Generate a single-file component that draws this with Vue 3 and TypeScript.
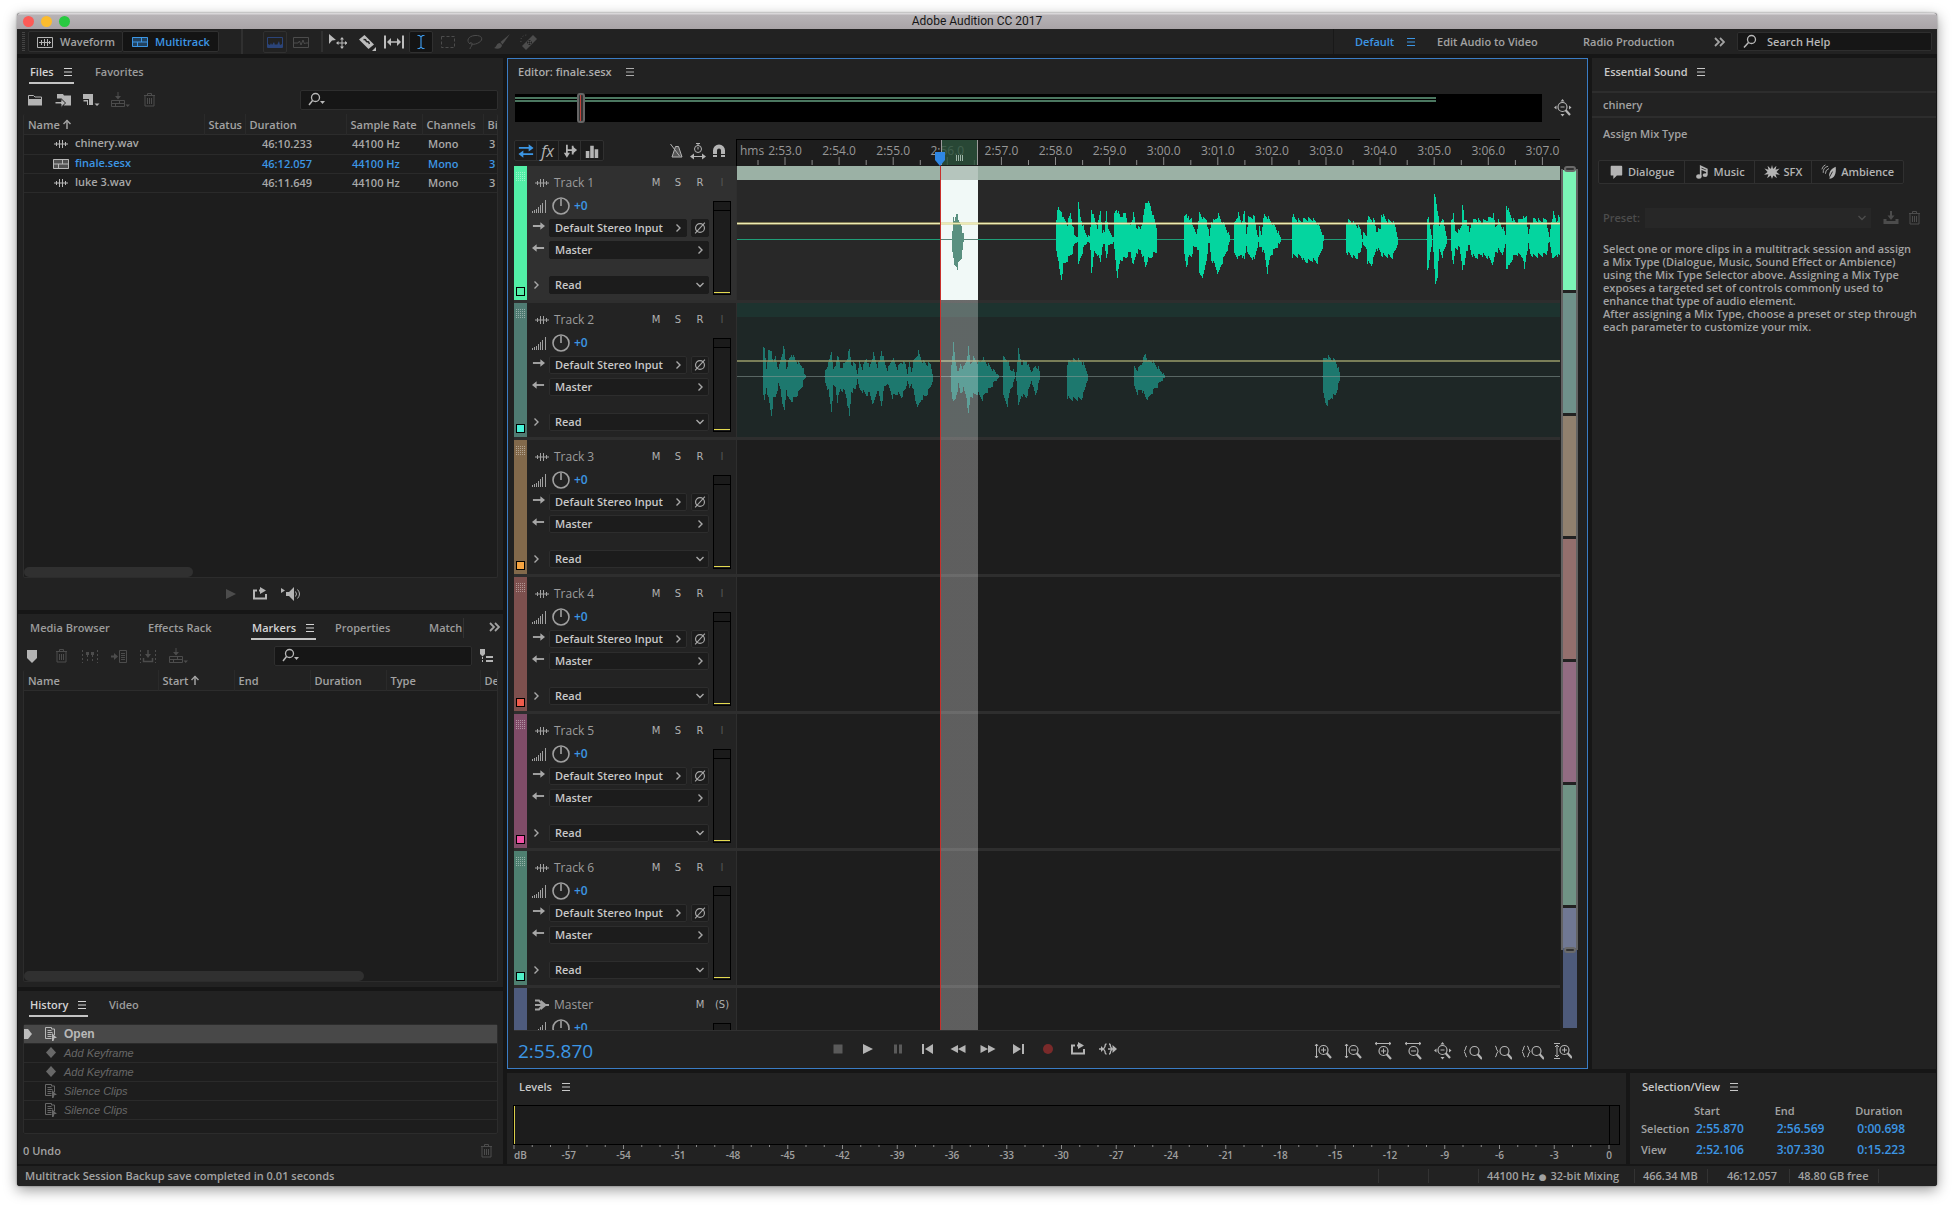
<script setup lang="ts">
import { computed } from 'vue'

interface FileRow { icon: string; name: string; duration: string; rate: string; channels: string; bits: string; active?: boolean }
interface Track { name: string; strip: string; chip: string; map: string }
type Key = [number, number, number]

const files: FileRow[] = [
  { icon: 'wave', name: 'chinery.wav', duration: '46:10.233', rate: '44100 Hz', channels: 'Mono', bits: '3' },
  { icon: 'multi', name: 'finale.sesx', duration: '46:12.057', rate: '44100 Hz', channels: 'Mono', bits: '3', active: true },
  { icon: 'wave', name: 'luke 3.wav', duration: '46:11.649', rate: '44100 Hz', channels: 'Mono', bits: '3' },
]

const tracks: Track[] = [
  { name: 'Track 1', strip: '#52efa7', chip: '#52efa7', map: '#7bf4b6' },
  { name: 'Track 2', strip: '#4f7b72', chip: '#47f3d9', map: '#6f918a' },
  { name: 'Track 3', strip: '#82694b', chip: '#f6a440', map: '#90806e' },
  { name: 'Track 4', strip: '#7d504e', chip: '#ef5b4b', map: '#936f6d' },
  { name: 'Track 5', strip: '#804c68', chip: '#f050a5', map: '#926c82' },
  { name: 'Track 6', strip: '#4e7f70', chip: '#50f0c8', map: '#709385' },
]

const history = [
  { icon: 'keyframe', label: 'Add Keyframe' },
  { icon: 'keyframe', label: 'Add Keyframe' },
  { icon: 'script', label: 'Silence Clips' },
  { icon: 'script', label: 'Silence Clips' },
]

const transport = ['stop', 'play', 'pause', 'tostart', 'rewind', 'forward', 'toend', 'record', 'loop', 'skip']
const zooms = ['zin-v', 'zout-v', 'zin-h', 'zout-h', 'zfull', 'zleft', 'zright', 'zsel', 'zamp']

/* Time ruler: the lane shows 823 units, one second is 54.1 of them. */
const LANE = 823
const ruler = Array.from({ length: 15 }, (_, i) => {
  const s = 173 + i
  return { at: ((48 + i * 54.1) / LANE) * 100, label: `${Math.floor(s / 60)}:${String(s % 60).padStart(2, '0')}.0` }
})
const halves = Array.from({ length: 15 }, (_, i) => ((21 + i * 54.1) / LANE) * 100)

const db = Array.from({ length: 61 }, (_, i) => ({
  at: (i / 60) * 100,
  major: i % 3 === 0,
  label: i === 0 ? 'dB' : i % 3 === 0 ? (i === 60 ? '0' : `-${60 - i}`) : '',
}))

const picked: Key[] = [[214,0,0],[215,10,10],[216,20,20],[217,17,26],[219,26,26],[220,27,28],[221,17,24],[224,14,18],[225,8,8],[227,0,0]]
const voice1: Key[][] = [
  [[319,20,10],[320,31,15],[322,28,30],[324,28,39],[326,20,25],[330,15,20],[333,26,15],[335,15,12],[337,4,4],[340,2,2],[341,35,26],[343,22,18],[347,8,6],[350,3,2],[352,3,3],[353,12,10],[354,30,32],[357,20,12],[360,12,14],[363,28,22],[365,8,6],[367,6,4],[369,29,17],[371,8,6],[376,2,2],[377,25,10],[379,30,30],[380,28,36],[383,22,20],[388,26,18],[391,14,14],[393,14,12],[396,25,26],[399,12,12],[403,10,10],[406,22,18],[408,36,27],[410,38,20],[413,33,18],[416,22,14],[419,12,12],[420,0,0]],
  [[446,0,0],[447,22,15],[449,26,26],[452,18,16],[454,22,16],[456,10,8],[459,6,6],[461,16,12],[462,26,34],[466,20,36],[469,20,20],[471,8,4],[472,3,3],[474,18,20],[477,18,24],[481,24,34],[484,18,24],[488,12,14],[491,6,6],[493,0,0]],
  [[496,0,0],[497,16,14],[501,25,18],[504,16,14],[507,27,20],[509,6,5],[511,21,16],[514,22,17],[517,22,20],[519,10,10],[521,2,2],[522,12,8],[524,4,6],[525,14,10],[527,24,14],[530,22,32],[533,18,16],[538,12,8],[542,4,4],[544,0,0]],
  [[554,0,0],[555,24,16],[558,20,16],[563,18,16],[568,20,22],[575,20,20],[580,16,22],[584,8,10],[587,0,0]],
  [[608,0,0],[609,17,12],[613,18,15],[619,14,18],[623,10,12],[625,0,2],[626,6,6],[629,3,8],[630,21,22],[634,20,25],[637,18,16],[639,8,8],[643,10,12],[644,25,15],[650,18,16],[655,18,17],[658,12,10],[661,0,0]],
  [[689,0,0],[690,22,28],[691,20,30],[693,10,12],[695,0,0],[696,12,14],[697,44,30],[698,42,44],[700,30,36],[702,12,10],[705,22,16],[707,12,10],[710,0,0]],
  [[713,0,0],[714,20,10],[716,24,26],[718,8,8],[722,8,8],[724,14,20],[725,36,28],[727,18,26],[729,20,10],[732,6,6],[734,16,14],[738,20,18],[744,17,14],[751,20,18],[756,24,24],[758,12,12],[761,18,10],[766,10,14],[768,4,4],[769,34,28],[772,26,26],[775,20,18],[779,16,14],[785,22,16],[787,20,30],[789,24,14],[791,4,4],[793,16,14],[797,20,16],[803,18,15],[809,20,14],[811,6,4],[812,2,2],[814,18,12],[816,26,20],[819,18,14],[821,22,16],[823,20,16]],
]
const voice2: Key[][] = [
  [[25,0,0],[26,27,20],[27,27,24],[29,8,10],[31,24,22],[34,26,38],[36,12,22],[38,20,20],[41,6,8],[43,16,12],[46,28,32],[47,26,34],[49,8,12],[51,14,22],[54,22,24],[58,16,20],[62,12,14],[65,10,8],[67,2,2],[69,0,0]],
  [[87,0,0],[88,6,6],[91,12,14],[94,25,34],[96,6,10],[98,10,10],[100,22,24],[103,8,12],[107,12,14],[109,16,20],[112,26,40],[114,12,14],[118,12,12],[120,2,2],[122,14,12],[125,8,14],[129,18,18],[132,8,16],[136,22,28],[140,10,12],[142,14,20],[144,26,28],[147,14,10],[150,6,6],[155,18,20],[160,8,16],[164,14,20],[168,12,12],[170,3,3],[172,13,12],[174,4,6],[176,14,14],[178,18,24],[181,24,30],[184,16,22],[189,12,18],[193,12,10],[196,0,0]],
  [[213,0,0],[214,12,14],[216,32,26],[218,14,22],[221,4,8],[223,12,16],[226,8,12],[229,16,20],[231,28,38],[233,12,20],[236,18,18],[240,14,16],[243,14,20],[245,18,22],[248,14,16],[252,10,12],[256,6,6],[260,2,2],[262,0,0]],
  [[265,0,0],[266,18,20],[270,16,28],[273,6,12],[276,6,6],[278,0,0],[279,4,4],[281,26,30],[284,12,18],[289,16,20],[291,10,14],[294,4,4],[298,10,18],[301,8,8],[303,0,0]],
  [[329,0,0],[330,13,20],[332,15,22],[338,16,22],[344,15,22],[347,10,14],[349,6,5],[351,0,0]],
  [[396,0,0],[397,9,10],[400,6,16],[404,12,12],[408,22,20],[411,14,22],[414,16,16],[419,10,10],[424,4,4],[428,0,0]],
  [[585,0,0],[586,16,18],[588,18,26],[590,19,27],[594,17,20],[598,15,18],[600,10,11],[602,4,4],[603,0,0]],
]

/* Turns the envelope keys of a phrase into a stepped outline round the zero line. */
function outline(keys: Key[], zero = 73): string {
  const up: string[] = []
  const down: string[] = []
  for (let k = 0; k < keys.length - 1; k++) {
    const [x0, u0, d0] = keys[k]
    const [x1, u1, d1] = keys[k + 1]
    for (let x = x0; x < x1; x++) {
      const t = (x - x0) / (x1 - x0)
      const rough = ((x * 7919) % 5) / 4 - 0.5
      const u = Math.max(0, Math.round(u0 + (u1 - u0) * t + rough * 4 * Math.min(1, u0 / 10)))
      const d = Math.max(0, Math.round(d0 + (d1 - d0) * t - rough * 4 * Math.min(1, d0 / 10)))
      up.push(`L${x} ${zero - u}H${x + 1}`)
      down.unshift(`L${x + 1} ${zero + 1 + d}H${x}`)
    }
  }
  return `M${keys[0][0]} ${zero}${up.join('')}${down.join('')}Z`
}
const path1 = computed(() => voice1.map((k) => outline(k)).join(''))
const path2 = computed(() => voice2.map((k) => outline(k)).join(''))
const pathPicked = computed(() => outline(picked))
</script>

<template>
  <svg class="defs" aria-hidden="true">
    <symbol id="menu" viewBox="0 0 10 10"><path d="M1 1.500h8M1 5h8M1 8.500h8" stroke="currentColor" /></symbol>
    <symbol id="wave" viewBox="0 0 18 18"><path d="M2 9h14M4.500 7v4M7.500 5v8M10.500 5v8M13.500 7v4" stroke="currentColor" fill="none" /></symbol>
    <symbol id="wavebox" viewBox="0 0 18 18"><path d="M1.500 4.500h15v10h-15zM3 9.500h12M5.500 7v5M8.500 6v7M11.500 6v7M13.500 8v3" stroke="currentColor" fill="none" /></symbol>
    <symbol id="multi" viewBox="0 0 18 18"><path d="M1 4h16v10H1z" fill="currentColor" fill-opacity=".35" /><path d="M1.500 4.500h15v9h-15zM1 9h16M10.500 4v5M6.500 9v5" stroke="currentColor" fill="none" /></symbol>
    <symbol id="spectrum" viewBox="0 0 18 18"><path d="M1.500 4.500h15v10h-15z" stroke="currentColor" fill="none" /><path d="M2 14v-3l2 1 1-2 1 2 2-3 1 3 1-1 1 1 2-4 1 4 2-1v3z" fill="currentColor" /></symbol>
    <symbol id="linebox" viewBox="0 0 18 18"><path d="M1.500 4.500h15v10h-15zM2 10h4l1.500-2 1.500 4 2-5 1.500 4 1-1h3" stroke="currentColor" fill="none" /></symbol>
    <symbol id="move" viewBox="0 0 18 18"><path d="M0 1l7 6-4 .5L0 11z" fill="currentColor" /><path d="M13 5.500v9M8.500 10h9" stroke="currentColor" /><path d="M13 4l2 2.500h-4zM13 16l2-2.500h-4zM7 10l2.500-2v4zM18.500 10L16 8v4z" fill="currentColor" /></symbol>
    <symbol id="razor" viewBox="0 0 18 18"><path d="M1 6.500L6.500 2 16 11.500 10.500 16z" fill="currentColor" /><path d="M5.500 6.500l2 .2 1 1.800 2 .5 1 2" stroke="#222" stroke-width="1.500" fill="none" /><path d="M18 14v4h-4z" fill="currentColor" /></symbol>
    <symbol id="slip" viewBox="0 0 20 18"><path d="M1 2.500v13M19 2.500v13" stroke="currentColor" stroke-width="2" /><path d="M5 9h10" stroke="currentColor" stroke-width="1.500" /><path d="M3 9l4-4v8zM17 9l-4-4v8z" fill="currentColor" /></symbol>
    <symbol id="ibeam" viewBox="0 0 18 18"><path d="M5.500 2.500h2L9 4l1.500-1.500h2M5.500 15.500h2L9 14l1.500 1.500h2M9 4v10" stroke="currentColor" fill="none" stroke-width="1.200" /></symbol>
    <symbol id="marquee" viewBox="0 0 18 18"><path d="M2.500 3.500h13v11h-13z" stroke="currentColor" stroke-dasharray="3 2" fill="none" /></symbol>
    <symbol id="lasso" viewBox="0 0 18 18"><path d="M4 11C0 8 2 3 9 2.500s9 4 4 7-9 1.500-9 .5 3-.5 2 2-2 2-2 4" stroke="currentColor" fill="none" /></symbol>
    <symbol id="brush" viewBox="0 0 18 18"><path d="M17 1L7.500 9l2 2.500zM7 10c-4 0-3 4-6 5 4 2 8 0 8-3z" fill="currentColor" /></symbol>
    <symbol id="heal" viewBox="0 0 18 18"><path d="M13 2l4 4L6 17l-4-4z" fill="currentColor" /><path d="M7 9.500h5M9.500 7v5" stroke="#222" stroke-dasharray="1 1" stroke-width="2" /><path d="M1 9c-1-4 2-7 6-7" stroke="currentColor" stroke-dasharray="1 2" fill="none" /></symbol>
    <symbol id="search" viewBox="0 0 18 18"><circle cx="10.500" cy="6.500" r="4" stroke="currentColor" fill="none" stroke-width="1.300" /><path d="M7.500 9.500L3 14.500" stroke="currentColor" stroke-width="1.500" /></symbol>
    <symbol id="search-menu" viewBox="0 0 18 18"><circle cx="7.500" cy="6.500" r="4" stroke="currentColor" fill="none" stroke-width="1.300" /><path d="M4.500 9.500L1 14" stroke="currentColor" stroke-width="1.500" /><path d="M12 10h5l-2.500 3z" fill="currentColor" /></symbol>
    <symbol id="folder" viewBox="0 0 18 18"><path d="M2.500 14V4.500h5L9 6h6.500v2" stroke="currentColor" fill="none" /><path d="M2 8h14v6.500H2z" fill="currentColor" /></symbol>
    <symbol id="import" viewBox="0 0 18 18"><path d="M3 3h6l1 1.500h7v10H10V11L6 7.500H3z" fill="currentColor" /><path d="M1 10.500h6V7.500l4.500 4.500L7 16.500V13H1z" fill="currentColor" stroke="#222" /></symbol>
    <symbol id="newfile" viewBox="0 0 18 18"><path d="M1 3h10v11H7V8H1z" fill="currentColor" /><path d="M1.500 9v1.500H5V14h1V9z" fill="currentColor" /><path d="M12.500 12.500h5L15 15z" fill="currentColor" /></symbol>
    <symbol id="insert" viewBox="0 0 20 18"><path d="M1.500 9.500h13v6h-13zM1 12.500h14M9.500 9.500v3M5.500 12.500v3M8 1v5" stroke="currentColor" fill="none" /><path d="M5 5h6l-3 3.500zM15.500 13.500h4.500L17.700 16z" fill="currentColor" /></symbol>
    <symbol id="trash" viewBox="0 0 18 18"><path d="M4 4.500h11M5 4.500v10.500h9V4.500M7.500 4V2.500h4V4M7.500 7v6M9.500 7v6M11.500 7v6" stroke="currentColor" fill="none" /></symbol>
    <symbol id="play" viewBox="0 0 18 18"><path d="M4 4l10 5-10 5z" fill="currentColor" /></symbol>
    <symbol id="loop" viewBox="0 0 18 18"><path d="M6 5.500H3v8h12V9M8 5.500h3" stroke="currentColor" fill="none" stroke-width="2" /><path d="M9 2l6 3.500L9 9z" fill="currentColor" /></symbol>
    <symbol id="speaker" viewBox="0 0 22 18"><path d="M1 3l4 2.500L1 8zM6 7h3l5-5v14l-5-5H6z" fill="currentColor" /><path d="M15.500 6.500q2 2.500 0 5M17.500 4.500q4 4.500 0 9" stroke="currentColor" fill="none" /></symbol>
    <symbol id="marker" viewBox="0 0 18 18"><path d="M4 3h10v8l-5 5-5-5z" fill="currentColor" /></symbol>
    <symbol id="range" viewBox="0 0 18 18"><path d="M1.500 3v13M16.500 3v13M6.500 8v8M11.500 8v8" stroke="currentColor" stroke-dasharray="2 2" /><path d="M5 5h3v3H5zM10 5h3v3h-3z" fill="currentColor" /></symbol>
    <symbol id="tolist" viewBox="0 0 18 18"><path d="M1 9.500h4" stroke="currentColor" stroke-width="2" /><path d="M4 6l4 3.500L4 13z" fill="currentColor" /><path d="M9.500 3.500h7v12h-7zM11 6.500h4M11 8.500h4M11 10.500h4M11 12.500h4" stroke="currentColor" fill="none" /></symbol>
    <symbol id="mergerange" viewBox="0 0 18 18"><path d="M1.500 3v13M16.500 3v13" stroke="currentColor" stroke-dasharray="2 2" /><path d="M9 3v5M4.500 11v3.500h9V11" stroke="currentColor" fill="none" stroke-width="1.500" /><path d="M6 7h6l-3 4z" fill="currentColor" /></symbol>
    <symbol id="markeropts" viewBox="0 0 18 18"><path d="M2 2h5v5L4.500 9.500 2 7z" fill="currentColor" /><path d="M4.500 10v6" stroke="currentColor" stroke-dasharray="2 1" /><path d="M8 10h7M8 14h7" stroke="currentColor" stroke-width="2" /></symbol>
    <symbol id="keyframe" viewBox="0 0 18 18"><path d="M9 3l5 5.500L9 14 4 8.500z" fill="currentColor" /></symbol>
    <symbol id="script" viewBox="0 0 18 18"><path d="M3.500 2.500h6v1.500h3v6M3.500 2.500v11h6M5.500 5.500h4M5.500 7.500h5M5.500 9.500h4M5.500 11.500h4" stroke="currentColor" fill="none" /><path d="M10 8l5 5h-2.500L11.500 16H10z" fill="currentColor" /></symbol>
    <symbol id="swap" viewBox="0 0 18 18"><path d="M1 5.500h12M17 12.500H5" stroke="currentColor" stroke-width="2" /><path d="M12 1.500l5.500 4-5.500 4zM6 8.500l-5.500 4 5.500 4z" fill="currentColor" /></symbol>
    <symbol id="sends" viewBox="0 0 18 18"><path d="M5.500 2v11M5.500 8h7M12 3v10" stroke="currentColor" stroke-width="2" fill="none" /><path d="M2 11h7l-3.500 5.500zM12 4l5 4-5 4z" fill="currentColor" /></symbol>
    <symbol id="bars" viewBox="0 0 18 18"><path d="M2 9h4v8H2zM7 3h4v14H7zM12 7h4v10h-4z" fill="currentColor" /></symbol>
    <symbol id="metronome" viewBox="0 0 18 18"><path d="M7.500 4.500h3L14 15H4z" stroke="currentColor" fill="currentColor" fill-opacity=".35" /><path d="M2.500 2l9 12" stroke="currentColor" /></symbol>
    <symbol id="timeres" viewBox="0 0 18 18"><circle cx="9" cy="7" r="3.500" stroke="currentColor" fill="none" /><path d="M7 1.500h4M9 2v2M9 5v2.500M3 14.500h12" stroke="currentColor" /><path d="M1 14.500l4-3v6zM17 14.500l-4-3v6z" fill="currentColor" /></symbol>
    <symbol id="magnet" viewBox="0 0 18 18"><path d="M5 15V8.500a4 4 0 0 1 8 0V15" stroke="currentColor" stroke-width="4" fill="none" /><path d="M3 12.500h5M10 12.500h5" stroke="#222" /></symbol>
    <symbol id="master" viewBox="0 0 18 18"><path d="M2 4.500h4L10 9l-4 4.500H2M2 9h14" stroke="currentColor" stroke-width="2" fill="none" /><path d="M8 4l6 5-6 5z" fill="currentColor" /></symbol>
    <symbol id="volume" viewBox="0 0 18 18"><path d="M2.500 14v2M4.500 13v3M6.500 12v4M8.500 10v6M10.500 8v8M12.500 6v10M15.500 3v13" stroke="currentColor" /></symbol>
    <symbol id="knob" viewBox="0 0 18 18"><circle cx="9" cy="9" r="8" stroke="currentColor" stroke-width="1.600" fill="none" /><path d="M9 2v7" stroke="currentColor" stroke-width="1.600" /></symbol>
    <symbol id="arrow-r" viewBox="0 0 14 10"><path d="M1 5h9" stroke="currentColor" stroke-width="2" /><path d="M9 1l5 4-5 4z" fill="currentColor" /></symbol>
    <symbol id="arrow-l" viewBox="0 0 14 10"><path d="M4 5h9" stroke="currentColor" stroke-width="2" /><path d="M5 1L0 5l5 4z" fill="currentColor" /></symbol>
    <symbol id="arrow-up" viewBox="0 0 10 10"><path d="M5 1v9" stroke="currentColor" stroke-width="1.500" /><path d="M1.500 5L5 1.500 8.500 5" stroke="currentColor" fill="none" stroke-width="1.500" /></symbol>
    <symbol id="chev-r" viewBox="0 0 10 10"><path d="M3.500 1.500L7 5 3.500 8.500" stroke="currentColor" fill="none" stroke-width="1.400" /></symbol>
    <symbol id="chev-d" viewBox="0 0 10 10"><path d="M1.500 3L5 6.500 8.500 3" stroke="currentColor" fill="none" stroke-width="1.400" /></symbol>
    <symbol id="chevs" viewBox="0 0 12 10"><path d="M2 1l4 4-4 4M7 1l4 4-4 4" stroke="currentColor" fill="none" stroke-width="1.800" /></symbol>
    <symbol id="phase" viewBox="0 0 18 18"><circle cx="9" cy="9" r="5" stroke="currentColor" fill="none" stroke-width="1.300" /><path d="M3.500 15L14.500 3" stroke="currentColor" stroke-width="1.200" /></symbol>
    <symbol id="stop" viewBox="0 0 18 18"><path d="M4.500 4.500h9v9h-9z" fill="currentColor" /></symbol>
    <symbol id="pause" viewBox="0 0 18 18"><path d="M5 4.500h3v9H5zM10 4.500h3v9h-3z" fill="currentColor" /></symbol>
    <symbol id="tostart" viewBox="0 0 18 18"><path d="M3 4h2v10H3zM14 4v10L6 9z" fill="currentColor" /></symbol>
    <symbol id="toend" viewBox="0 0 18 18"><path d="M13 4h2v10h-2zM4 4v10l8-5z" fill="currentColor" /></symbol>
    <symbol id="rewind" viewBox="0 0 18 18"><path d="M9 5v8L1.500 9zM16.500 5v8L9 9z" fill="currentColor" /></symbol>
    <symbol id="forward" viewBox="0 0 18 18"><path d="M1.500 5v8L9 9zM9 5v8l7.500-4z" fill="currentColor" /></symbol>
    <symbol id="record" viewBox="0 0 18 18"><circle cx="9" cy="9" r="5" fill="currentColor" /></symbol>
    <symbol id="skip" viewBox="0 0 18 18"><path d="M7.500 4q-1.500 0-1.500 2.500L4.500 9 6 11.500Q6 14 7.500 14M10 4q1.500 0 1.500 2.500L13 9l-1.500 2.500Q11.500 14 10 14M0 9h5M9 9h6" stroke="currentColor" fill="none" stroke-width="1.300" /><path d="M2 6l3 3-3 3zM13.500 5l4.500 4-4.500 4z" fill="currentColor" /></symbol>
    <symbol id="lens" viewBox="0 0 18 18"><circle cx="9.500" cy="8" r="4.500" stroke="currentColor" fill="none" stroke-width="1.200" /><path d="M12.500 11l4.500 5" stroke="currentColor" stroke-width="2.200" /></symbol>
    <symbol id="zin-v" viewBox="0 0 18 18"><use href="#lens" width="18" height="18" /><path d="M7 8h5M9.500 5.500v5M2.500 2v14M1 4l1.500-2L4 4M1 14l1.500 2L4 14" stroke="currentColor" fill="none" /></symbol>
    <symbol id="zout-v" viewBox="0 0 18 18"><use href="#lens" width="18" height="18" /><path d="M7 8h5M2.500 2v14M1 4l1.500-2L4 4M1 14l1.500 2L4 14" stroke="currentColor" fill="none" /></symbol>
    <symbol id="zin-h" viewBox="0 0 18 18"><use href="#lens" y="1" width="18" height="18" /><path d="M7 9h5M9.500 6.500v5M1 1.500h16M3 0L1 1.500 3 3M15 0l2 1.500L15 3" stroke="currentColor" fill="none" /></symbol>
    <symbol id="zout-h" viewBox="0 0 18 18"><use href="#lens" y="1" width="18" height="18" /><path d="M7 9h5M1 1.500h16M3 0L1 1.500 3 3M15 0l2 1.500L15 3" stroke="currentColor" fill="none" /></symbol>
    <symbol id="zfull" viewBox="0 0 18 18"><use href="#lens" x="-1" width="18" height="18" /><path d="M6.500 8h4" stroke="currentColor" /><path d="M8.500 0l2 2.500h-4zM8.500 17.500l2-2.500h-4zM0 8.500L2.500 6.500v4zM17.500 8.500L15 6.500v4z" fill="currentColor" /></symbol>
    <symbol id="zleft" viewBox="0 0 18 18"><use href="#lens" x="1" y="1" width="18" height="18" /><path d="M3 4q-1.500 0-1.500 3L0 9.500 1.500 12q0 3 1.500 3" stroke="currentColor" fill="none" /></symbol>
    <symbol id="zright" viewBox="0 0 18 18"><use href="#lens" x="1" y="1" width="18" height="18" /><path d="M1 4q1.500 0 1.500 3L4 9.500 2.500 12q0 3-1.500 3" stroke="currentColor" fill="none" /></symbol>
    <symbol id="zsel" viewBox="0 0 22 18"><use href="#lens" x="5" y="1" width="18" height="18" /><path d="M3 4q-1.500 0-1.500 3L0 9.500 1.500 12q0 3 1.500 3M5 4q1.500 0 1.500 3L8 9.500 6.500 12q0 3-1.500 3" stroke="currentColor" fill="none" /></symbol>
    <symbol id="zamp" viewBox="0 0 18 18"><use href="#lens" x="1" width="18" height="18" /><path d="M8 8h5M10.500 5.500v5M0 1.500h6M0 16.500h6M3 3v12M1 5l2-2 2 2M1 13l2 2 2-2" stroke="currentColor" fill="none" /></symbol>
    <symbol id="bubble" viewBox="0 0 18 18"><path d="M4 2h11q1 0 1 1v9q0 1-1 1h-5l-4 4v-4H4q-1 0-1-1V3q0-1 1-1z" fill="currentColor" /></symbol>
    <symbol id="note" viewBox="0 0 18 18"><path d="M7.500 14V2.500l7 3.500V12M7.500 5.500l7 3" stroke="currentColor" fill="none" stroke-width="1.800" /><ellipse cx="5.500" cy="14" rx="3" ry="2.500" fill="currentColor" /><ellipse cx="12.500" cy="12.500" rx="2.800" ry="2.200" fill="currentColor" /></symbol>
    <symbol id="burst" viewBox="0 0 18 18"><path d="M9 1l1.200 4.500L14 2l-1 4.500 4.500-1.500L14 9l4 3-5-.5L14.500 16l-4-3L9 17l-1.500-4-4 3L5 11.500 0 12l4-3L.5 5 5 6.500 4 2l3.800 3.500z" fill="currentColor" /></symbol>
    <symbol id="leaf" viewBox="0 0 18 18"><path d="M16.500 3c1 8-1.500 13-7 13.500-1.500-6 1-11 7-13.500z" fill="currentColor" /><path d="M8 17.500l5-9" stroke="#1d1d1d" /><path d="M2.500 10Q2 4 8 2.500M5 11Q4.500 7 9 5M1 6q1-4 4-5" stroke="currentColor" fill="none" /></symbol>
    <symbol id="save" viewBox="0 0 18 18"><path d="M1.500 10v5h15v-5h-3v2h-9v-2z" fill="currentColor" /><path d="M9 2v6" stroke="currentColor" stroke-width="2" /><path d="M5.500 6.500h7L9 11z" fill="currentColor" /></symbol>
  </svg>

  <div class="desktop">
    <div class="window">
      <header class="titlebar">
        <span class="lights"><i class="red"></i><i class="amber"></i><i class="green"></i></span>
        <h1>Adobe Audition CC 2017</h1>
      </header>

      <nav class="toolbar">
        <span class="grip"></span>
        <button class="mode"><svg class="i18"><use href="#wavebox" /></svg>Waveform</button>
        <button class="mode on"><svg class="i18"><use href="#multi" /></svg>Multitrack</button>
        <span class="sep wide"></span>
        <button class="tool boxed navy" aria-label="Spectral view"><svg class="i18"><use href="#spectrum" /></svg></button>
        <button class="tool off" aria-label="Pitch view"><svg class="i18"><use href="#linebox" /></svg></button>
        <span class="sep"></span>
        <button class="tool first" aria-label="Move"><svg class="i18"><use href="#move" /></svg></button>
        <button class="tool" aria-label="Razor"><svg class="i18"><use href="#razor" /></svg></button>
        <button class="tool" aria-label="Slip"><svg class="i20"><use href="#slip" /></svg></button>
        <button class="tool boxed blue" aria-label="Time selection"><svg class="i18"><use href="#ibeam" /></svg></button>
        <button class="tool off" aria-label="Marquee"><svg class="i18"><use href="#marquee" /></svg></button>
        <button class="tool off" aria-label="Lasso"><svg class="i18"><use href="#lasso" /></svg></button>
        <button class="tool off" aria-label="Brush"><svg class="i18"><use href="#brush" /></svg></button>
        <button class="tool off" aria-label="Heal"><svg class="i18"><use href="#heal" /></svg></button>
        <div class="workspaces">
          <button class="blue">Default<svg class="i10"><use href="#menu" /></svg></button>
          <button>Edit Audio to Video</button>
          <button>Radio Production</button>
          <button aria-label="More workspaces"><svg class="i12"><use href="#chevs" /></svg></button>
        </div>
        <label class="field help"><svg class="i18"><use href="#search" /></svg><input type="text" placeholder="Search Help" aria-label="Search Help" /></label>
      </nav>

      <main class="main">
        <div class="left">
          <section class="panel files">
            <div class="tabs">
              <button class="tab on">Files<svg class="i10"><use href="#menu" /></svg></button>
              <button class="tab">Favorites</button>
            </div>
            <div class="tools">
              <button aria-label="Open"><svg class="i18"><use href="#folder" /></svg></button>
              <button aria-label="Import"><svg class="i18"><use href="#import" /></svg></button>
              <button aria-label="New"><svg class="i18"><use href="#newfile" /></svg></button>
              <button class="off" aria-label="Insert"><svg class="i20"><use href="#insert" /></svg></button>
              <button class="off" aria-label="Delete"><svg class="i18"><use href="#trash" /></svg></button>
              <label class="field find"><svg class="i18"><use href="#search-menu" /></svg><input type="text" aria-label="Filter files" /></label>
            </div>
            <div class="list">
              <table class="filetable">
                <colgroup><col class="c-name" /><col class="c-status" /><col class="c-dur" /><col class="c-rate" /><col class="c-chan" /><col /></colgroup>
                <thead><tr><th>Name<svg class="i10"><use href="#arrow-up" /></svg></th><th>Status</th><th>Duration</th><th>Sample Rate</th><th>Channels</th><th>Bi</th></tr></thead>
                <tbody>
                  <tr v-for="f in files" :key="f.name" :class="{ active: f.active }">
                    <td class="fname"><svg class="i18"><use :href="'#' + f.icon" /></svg>{{ f.name }}</td><td></td><td class="num">{{ f.duration }}</td><td>{{ f.rate }}</td><td>{{ f.channels }}</td><td>{{ f.bits }}</td>
                  </tr>
                </tbody>
              </table>
              <div class="hscroll short"></div>
            </div>
            <div class="preview">
              <button class="off" aria-label="Play"><svg class="i18"><use href="#play" /></svg></button>
              <button aria-label="Loop"><svg class="i18"><use href="#loop" /></svg></button>
              <button aria-label="Auto play"><svg class="i22"><use href="#speaker" /></svg></button>
            </div>
          </section>

          <section class="panel markers">
            <div class="tabs">
              <button class="tab">Media Browser</button>
              <button class="tab">Effects Rack</button>
              <button class="tab on">Markers<svg class="i10"><use href="#menu" /></svg></button>
              <button class="tab">Properties</button>
              <button class="tab cut">Match</button>
              <button class="more" aria-label="More tabs"><svg class="i12"><use href="#chevs" /></svg></button>
            </div>
            <div class="tools">
              <button aria-label="Add marker"><svg class="i18"><use href="#marker" /></svg></button>
              <button class="off" aria-label="Delete marker"><svg class="i18"><use href="#trash" /></svg></button>
              <button class="off" aria-label="Merge"><svg class="i18"><use href="#range" /></svg></button>
              <button class="off" aria-label="To playlist"><svg class="i18"><use href="#tolist" /></svg></button>
              <button class="off" aria-label="Export range"><svg class="i18"><use href="#mergerange" /></svg></button>
              <button class="off" aria-label="Insert"><svg class="i20"><use href="#insert" /></svg></button>
              <div class="findgroup">
                <label class="field find"><svg class="i18"><use href="#search-menu" /></svg><input type="text" aria-label="Filter markers" /></label>
                <button aria-label="Marker options"><svg class="i18"><use href="#markeropts" /></svg></button>
              </div>
            </div>
            <div class="list">
              <table class="markertable">
                <colgroup><col class="m-name" /><col class="m-col" /><col class="m-col" /><col class="m-col" /><col class="m-type" /><col /></colgroup>
                <thead><tr><th>Name</th><th>Start<svg class="i10"><use href="#arrow-up" /></svg></th><th>End</th><th>Duration</th><th>Type</th><th>De</th></tr></thead>
              </table>
              <div class="hscroll long"></div>
            </div>
          </section>

          <section class="panel history">
            <div class="tabs">
              <button class="tab on">History<svg class="i10"><use href="#menu" /></svg></button>
              <button class="tab">Video</button>
            </div>
            <ul>
              <li class="now"><i class="pin"></i><svg class="i18"><use href="#script" /></svg>Open</li>
              <li v-for="(h, i) in history" :key="i"><svg class="i18"><use :href="'#' + h.icon" /></svg>{{ h.label }}</li>
            </ul>
            <footer><span>0 Undo</span><button class="off" aria-label="Delete history"><svg class="i18"><use href="#trash" /></svg></button></footer>
          </section>
        </div>

        <div class="right">
          <div class="upper">
            <section class="panel editor">
              <div class="ed-title">Editor: finale.sesx<svg class="i10"><use href="#menu" /></svg></div>
              <div class="overview">
                <div class="ov-map"><span class="ov-line"></span><span class="ov-line"></span><span class="ov-view"></span></div>
                <button aria-label="Zoom out full"><svg class="i18"><use href="#zfull" /></svg></button>
              </div>

              <div class="stage">
                <div class="session">
                  <div class="ruler-row">
                    <div class="ed-tools">
                      <div class="switches">
                        <button class="blue" aria-label="Inputs and outputs"><svg class="i16"><use href="#swap" /></svg></button>
                        <button class="fx">fx</button>
                        <button aria-label="Sends"><svg class="i16"><use href="#sends" /></svg></button>
                        <button aria-label="EQ"><svg class="i16"><use href="#bars" /></svg></button>
                      </div>
                      <button aria-label="Metronome"><svg class="i18"><use href="#metronome" /></svg></button>
                      <button aria-label="Time stretch"><svg class="i18"><use href="#timeres" /></svg></button>
                      <button aria-label="Snapping"><svg class="i18"><use href="#magnet" /></svg></button>
                    </div>
                    <div class="ruler">
                      <svg class="ticks">
                        <text x="3" y="15">hms</text>
                        <line v-for="t in ruler" :key="t.label" :x1="t.at + '%'" :x2="t.at + '%'" y1="17" y2="25" />
                        <line v-for="h in halves" :key="h" :x1="h + '%'" :x2="h + '%'" y1="20" y2="25" />
                        <text v-for="t in ruler" :key="t.label" :x="t.at + '%'" y="15" text-anchor="middle">{{ t.label }}</text>
                      </svg>
                      <div class="ruler-sel"><i></i></div>
                      <svg class="playhead" viewBox="0 0 12 14"><path d="M1 0h10v8l-5 6-5-6z" fill="#2f87e4" /></svg>
                    </div>
                  </div>

                  <div class="tracks">
                    <article v-for="(t, i) in tracks" :key="t.name" class="track" :class="{ selected: i === 0 }">
                      <div class="strip" :style="{ background: t.strip }"><i class="dots"></i><i class="chip" :style="{ background: t.chip }"></i></div>
                      <div class="controls">
                        <div class="c-top"><svg class="i18"><use href="#wave" /></svg><span class="tname">{{ t.name }}</span><button>M</button><button>S</button><button>R</button><button class="dim">I</button></div>
                        <div class="c-body">
                          <div class="c-rows">
                            <div class="vol"><svg class="i18"><use href="#volume" /></svg><svg class="i18 knob"><use href="#knob" /></svg><span class="blue">+0</span></div>
                            <div class="io"><svg class="iarrow"><use href="#arrow-r" /></svg><button class="drop">Default Stereo Input<svg class="i10"><use href="#chev-r" /></svg></button><button class="drop phase" aria-label="Polarity"><svg class="i16"><use href="#phase" /></svg></button></div>
                            <div class="io"><svg class="iarrow"><use href="#arrow-l" /></svg><button class="drop">Master<svg class="i10"><use href="#chev-r" /></svg></button></div>
                            <div class="io auto"><button class="fold" aria-label="Show automation"><svg class="i10"><use href="#chev-r" /></svg></button><label class="drop"><select :aria-label="t.name + ' automation mode'"><option>Read</option></select><svg class="i10"><use href="#chev-d" /></svg></label></div>
                          </div>
                          <div class="vu"></div>
                        </div>
                      </div>
                      <div class="lane">
                        <svg v-if="i === 0" viewBox="0 0 823 134" preserveAspectRatio="none">
                          <rect width="823" height="134" fill="#282828" />
                          <rect width="823" height="14" fill="#9bb1a5" />
                          <rect y="73" width="823" height="1" fill="#1f9d78" />
                          <path :d="path1" fill="#04d59f" />
                          <rect x="204" width="37" height="134" fill="#f1f9f7" />
                          <rect x="204" width="37" height="14" fill="#b5c5bd" />
                          <rect x="204" y="73" width="37" height="1" fill="#5b8478" />
                          <path :d="pathPicked" fill="#5a9080" />
                          <rect y="56" width="823" height="3" fill="#d8cc80" fill-opacity=".5" />
                          <rect y="57" width="823" height="1" fill="#ecebb4" />
                        </svg>
                        <svg v-if="i === 1" viewBox="0 0 823 134" preserveAspectRatio="none">
                          <rect width="823" height="134" fill="#1e2726" />
                          <rect width="823" height="14" fill="#1d332f" />
                          <path :d="path2" fill="#1d786e" />
                          <rect y="73" width="823" height="1" fill="#8a9a96" fill-opacity=".55" />
                          <rect y="57" width="823" height="2" fill="#9a9c6a" fill-opacity=".75" />
                        </svg>
                      </div>
                    </article>
                    <article class="track bus">
                      <div class="strip master"></div>
                      <div class="controls">
                        <div class="c-top"><svg class="i18"><use href="#master" /></svg><span class="tname">Master</span><button>M</button><button>(S)</button></div>
                        <div class="c-body">
                          <div class="c-rows"><div class="vol"><svg class="i18"><use href="#volume" /></svg><svg class="i18 knob"><use href="#knob" /></svg><span class="blue">+0</span></div></div>
                          <div class="vu"></div>
                        </div>
                      </div>
                      <div class="lane"></div>
                    </article>
                    <div class="range"><span></span></div>
                  </div>
                </div>

                <div class="trackmap">
                  <span v-for="t in tracks" :key="t.name" :style="{ background: t.map }"></span>
                  <span class="last"></span>
                  <div class="thumb"><i></i><i></i></div>
                </div>
              </div>

              <footer class="deck">
                <output>2:55.870</output>
                <div class="transport">
                  <button v-for="t in transport" :key="t" :class="t" :aria-label="t"><svg class="i18"><use :href="'#' + t" /></svg></button>
                </div>
                <div class="zooms">
                  <button v-for="z in zooms" :key="z" :aria-label="z"><svg :class="z === 'zsel' ? 'i22' : 'i18'"><use :href="'#' + z" /></svg></button>
                </div>
              </footer>
            </section>

            <aside class="panel essential">
              <h2>Essential Sound<svg class="i10"><use href="#menu" /></svg></h2>
              <div class="clip">chinery</div>
              <div class="ess-body">
                <div class="assign">Assign Mix Type</div>
                <div class="types">
                  <button><svg class="i16"><use href="#bubble" /></svg>Dialogue</button>
                  <button><svg class="i16"><use href="#note" /></svg>Music</button>
                  <button><svg class="i16"><use href="#burst" /></svg>SFX</button>
                  <button><svg class="i16"><use href="#leaf" /></svg>Ambience</button>
                </div>
                <div class="preset">
                  <label for="preset">Preset:</label>
                  <span class="pre-box"><select id="preset" disabled></select><svg class="i10"><use href="#chev-d" /></svg></span>
                  <button aria-label="Save preset"><svg class="i18"><use href="#save" /></svg></button>
                  <button aria-label="Delete preset"><svg class="i18"><use href="#trash" /></svg></button>
                </div>
                <p>Select one or more clips in a multitrack session and assign<br />a Mix Type (Dialogue, Music, Sound Effect or Ambience)<br />using the Mix Type Selector above. Assigning a Mix Type<br />exposes a targeted set of controls commonly used to<br />enhance that type of audio element.</p>
                <p>After assigning a Mix Type, choose a preset or step through<br />each parameter to customize your mix.</p>
              </div>
            </aside>
          </div>

          <div class="lower">
            <section class="panel levels">
              <h2>Levels<svg class="i10"><use href="#menu" /></svg></h2>
              <div class="meter"></div>
              <svg class="scale">
                <svg x="1" width="100%" class="inner">
                  <g v-for="d in db" :key="d.at">
                    <line :x1="d.at + '%'" :x2="d.at + '%'" y1="0" :y2="d.major ? 4 : 2" />
                    <text v-if="d.label" :x="d.at + '%'" y="14" :text-anchor="d.label === 'dB' ? 'start' : 'middle'">{{ d.label }}</text>
                  </g>
                </svg>
              </svg>
            </section>
            <section class="panel selview">
              <h2>Selection/View<svg class="i10"><use href="#menu" /></svg></h2>
              <table>
                <thead><tr><th></th><th>Start</th><th>End</th><th>Duration</th></tr></thead>
                <tbody>
                  <tr><th>Selection</th><td>2:55.870</td><td>2:56.569</td><td>0:00.698</td></tr>
                  <tr><th>View</th><td>2:52.106</td><td>3:07.330</td><td>0:15.223</td></tr>
                </tbody>
              </table>
            </section>
          </div>
        </div>
      </main>

      <footer class="status">
        <span class="msg">Multitrack Session Backup save completed in 0.01 seconds</span>
        <span class="cell s1"></span><span class="cell s1"></span>
        <span class="cell s2">44100 Hz <b>●</b> 32-bit Mixing</span>
        <span class="cell s3">466.34 MB</span>
        <span class="cell s4">46:12.057</span>
        <span class="cell s5">48.80 GB free</span>
        <span class="cell s6"></span>
      </footer>
    </div>
  </div>
</template>

<style>
html, body { margin: 0; background: #fff; overflow: hidden; }
</style>

<style scoped>
.defs { position: absolute; width: 0; height: 0; }
.desktop { box-sizing: border-box; height: 100vh; padding: 13px 17px 21px; font: 600 11px/14px "Open Sans", "Noto Sans", sans-serif; color: #a2a2a2; }
.desktop *, .desktop *::before, .desktop *::after { box-sizing: border-box; }
button, input, select { font: inherit; color: inherit; background: none; border: 0; padding: 0; margin: 0; border-radius: 0; outline: 0; }
button { display: inline-flex; align-items: center; justify-content: center; white-space: nowrap; }
h1, h2, p, ul { margin: 0; padding: 0; font-weight: inherit; font-size: inherit; list-style: none; }
svg { display: block; flex: none; overflow: visible; }
.i10 { width: 10px; height: 10px; }
.i12 { width: 12px; height: 10px; }
.i16 { width: 16px; height: 16px; }
.i18 { width: 18px; height: 18px; }
.i20 { width: 20px; height: 18px; }
.i22 { width: 22px; height: 18px; }
.blue { color: #3c96e4; }
.off { color: #4c4c4c; }

.window { height: 100%; display: flex; flex-direction: column; background: #161616; border-radius: 3px; overflow: hidden; box-shadow: 0 4px 14px rgba(0, 0, 0, .4), 0 0 2px rgba(0, 0, 0, .5); }
.titlebar { flex: 0 0 16px; display: grid; grid-template-columns: 1fr auto 1fr; align-items: center; padding: 0 6px; background: linear-gradient(#d9d7d9 0 1px, #b7b3b6 2px, #a9a4a7); color: #161616; }
.titlebar h1 { font: 12px/16px Roboto, sans-serif; }
.lights { display: flex; gap: 7px; }
.lights i { width: 11px; height: 11px; border-radius: 50%; }
.red { background: #fc5b57; }
.amber { background: #fcbc2e; }
.green { background: #28c940; }

.toolbar { flex: 0 0 25px; display: flex; align-items: center; background: #222; padding: 0 5px; margin-bottom: 4px; color: #bcbcbc; }
.grip { width: 3px; height: 19px; margin-right: 3px; background: repeating-linear-gradient(#444 0 1px, transparent 1px 2px); }
.mode { height: 21px; width: 95px; border: 1px solid #303030; border-radius: 2px; gap: 6px; background: #1d1d1d; color: #a2a2a2; }
.mode.on { width: 97px; margin-left: -1px; background: #141414; color: #3c96e4; }
.mode svg { color: #b4b4b4; }
.mode.on svg { color: #3c96e4; }
.sep { width: 2px; height: 21px; background: #303030; margin: 0 3px 0 5px; }
.sep.wide { margin: 0 20px 0 22px; height: 25px; }
.tool { width: 24px; height: 22px; margin-right: 3px; }
.tool.first { margin-right: 5px; }
.tool.boxed { border: 1px solid #303030; border-radius: 2px; }
.tool.boxed.blue { background: #141414; }
.tool.navy { color: #2b4479; margin-right: 2px; }
.workspaces { margin-left: auto; height: 25px; display: grid; grid-template-columns: 82px 146px 130px 24px; justify-items: start; border-left: 1px solid #191919; padding-left: 21px; }
.workspaces button { gap: 12px; color: #a2a2a2; }
.workspaces .blue { color: #3c96e4; }
.field { display: flex; align-items: center; height: 20px; border: 1px solid #2e2e2e; border-radius: 2px; background: #161616; color: #b8b8b8; }
.field input { flex: 1; min-width: 0; }
.help { width: 195px; height: 19px; padding-left: 3px; gap: 8px; }
.help input::placeholder { color: #b8b8b8; opacity: 1; }

.main { flex: 1; min-height: 0; display: flex; gap: 4px; padding: 0 1px; }
.panel { background: #222; }
.left { flex: 0 0 485px; display: flex; flex-direction: column; gap: 4px; min-height: 0; }
.files { flex: 552 1 0; display: flex; flex-direction: column; min-height: 0; }
.markers { flex: 373 1 0; display: flex; flex-direction: column; min-height: 0; }
.history { flex: 0 0 173px; display: flex; flex-direction: column; }
.tabs { flex: 0 0 28px; display: grid; align-items: start; justify-items: start; padding: 4px 0 0 11px; }
.files .tabs { grid-template-columns: 65px 1fr; }
.history .tabs { grid-template-columns: 79px 1fr; }
.markers .tabs { grid-template-columns: 118px 104px 83px 94px 42px 1fr; }
.tab { height: 22px; padding: 0 1px; gap: 9px; color: #9c9c9c; border-bottom: 2px solid transparent; }
.tab.on { color: #d4d4d4; border-bottom-color: #c4c4c4; }
.cut { border-right: 1px solid #333; border-bottom: 0; height: 20px; }
.more { height: 18px; justify-self: end; padding-right: 3px; }
.tools { flex: 0 0 28px; display: flex; align-items: center; color: #b4b4b4; padding-left: 8px; }
.files .tools { gap: 10px; padding-right: 5px; }
.files .find { margin-left: auto; }
.markers .tools { gap: 11px; padding: 0 7px 0 5px; }
.findgroup { display: flex; align-items: center; gap: 6px; margin-left: auto; }
.find { width: 198px; padding-left: 7px; gap: 3px; }
.list { flex: 1; min-height: 0; margin: 0 5px; display: flex; flex-direction: column; justify-content: space-between; border: 1px solid #2c2c2c; border-top: 0; background: linear-gradient(#222 0 20px, #2c2c2c 20px 21px, #1d1d1d 21px); border-radius: 2px; }
table { border-collapse: collapse; table-layout: fixed; width: 100%; }
th, td { padding: 0; font-weight: inherit; text-align: left; white-space: nowrap; }
thead svg { display: inline-block; margin-left: 2px; }
.list th { height: 21px; padding-left: 4px; border-left: 1px solid #2a2a2a; color: #a2a2a2; overflow: hidden; }
.list th:first-child { border-left: 0; }
.list td { height: 19px; border-bottom: 1px solid #2a2a2a; padding-left: 6px; color: #a8a8a8; overflow: hidden; }
.c-name { width: 180px; } .c-status { width: 41px; } .c-dur { width: 101px; } .c-rate { width: 76px; } .c-chan { width: 61px; }
.m-name { width: 134px; } .m-col { width: 76px; } .m-type { width: 94px; }
.list .fname { padding-left: 28px; }
.fname svg { display: inline-block; vertical-align: middle; margin-right: 5px; color: #b8b8b8; }
.list .num { padding-left: 17px; }
.list .active td { color: #3c96e4; }
.hscroll { height: 10px; border-radius: 5px; background: #303030; }
.short { width: 169px; }
.long { width: 340px; }
.markers .list { margin-bottom: 5px; }
.preview { flex: 0 0 32px; display: flex; align-items: center; justify-content: center; gap: 11px; padding-left: 3px; color: #b4b4b4; }

.history ul { flex: 0 0 110px; margin: 5px 5px 0; border: 1px solid #2c2c2c; border-radius: 2px; background: #1d1d1d; font: italic 11px/18px "Liberation Sans", Arial, sans-serif; color: #686868; }
.history li { display: flex; align-items: center; gap: 4px; height: 19px; padding-left: 18px; border-bottom: 1px solid #2a2a2a; }
.history li.now { padding-left: 0; background: #484848; color: #b8b8b8; font-size: 12px; font-weight: bold; font-style: normal; }
.pin { width: 8px; height: 10px; margin-right: 6px; background: #bcbcbc; clip-path: polygon(0 0, 50% 0, 100% 50%, 50% 100%, 0 100%); }
.history footer { flex: 1; display: flex; align-items: center; justify-content: space-between; padding: 3px 8px 0 5px; }

.right { flex: 1; min-width: 0; display: flex; flex-direction: column; gap: 4px; }
.upper { flex: 1; min-height: 0; display: flex; gap: 4px; }
.lower { flex: 0 0 91px; display: flex; gap: 4px; }
.editor { flex: 1; min-width: 0; border: 1px solid #3a7cc4; display: flex; flex-direction: column; padding: 0 9px 0 6px; }
.ed-title { flex: 0 0 35px; display: flex; align-items: center; gap: 13px; padding: 0 0 9px 4px; color: #acacac; }
.overview { flex: 0 0 28px; display: flex; gap: 12px; align-items: center; padding-left: 1px; padding-right: 6px; color: #b4b4b4; }
.ov-map { position: relative; flex: 1; height: 28px; padding-top: 3px; background: #000; }
.ov-line { display: block; width: 89.7%; height: 2px; margin-bottom: 1px; background: #4b7760; }
.ov-view { position: absolute; left: 6%; top: -1px; width: 8px; height: 30px; border: 2px solid #666; border-radius: 3px; background: linear-gradient(90deg, #333 1px, #c0443c 1px 2px, #333 2px); }
.stage { flex: 1; min-height: 0; margin-top: 17px; display: flex; gap: 1px; }
.session { flex: 1; min-width: 0; display: flex; flex-direction: column; }
.ruler-row { flex: 0 0 27px; display: flex; }
.ed-tools { flex: 0 0 223px; display: flex; gap: 3px; padding-right: 8px; align-items: center; color: #b4b4b4; border-right: 1px solid #000; }
.switches { display: flex; height: 21px; border: 1px solid #303030; border-radius: 2px; background: #1b1b1b; margin: 0 auto 4px 0; }
.switches button { width: 22px; border-right: 1px solid #303030; }
.switches button:last-child { border-right: 0; }
.switches .fx { font: italic 16px/16px "Open Sans", sans-serif; }
.ed-tools > button { margin-bottom: 4px; }
.ruler { position: relative; flex: 1; overflow: hidden; border-top: 1px solid #000; background: #1d1d1d; }
.ticks { width: 100%; height: 26px; }
.ticks text { fill: #979797; font-size: 12px; font-weight: 400; }
.ticks line { stroke: #8a8a8a; }
.ruler-sel { position: absolute; left: 24.8%; width: 4.5%; top: 0; bottom: 1px; display: flex; justify-content: center; align-items: flex-end; padding-bottom: 4px; background: rgba(44, 82, 60, .8); border: solid #9a9a9a; border-width: 0 1px; }
.ruler-sel i { width: 7px; height: 6px; background: repeating-linear-gradient(90deg, #9fb5a8 0 1px, transparent 1px 2px); }
.playhead { position: absolute; left: 24.8%; bottom: 0; width: 12px; height: 14px; margin-left: -7px; }

.tracks { position: relative; flex: 1; min-height: 0; overflow: hidden; border-bottom: 1px solid #303030; }
.track { display: flex; height: 137px; border-bottom: 3px solid #2e2e2e; background: #232323; }
.strip { flex: 0 0 13px; display: flex; flex-direction: column; justify-content: space-between; padding: 6px 2px 4px; }
.strip.master { background: #4e5b7d; }
.dots { height: 9px; width: 9px; background: repeating-linear-gradient(90deg, rgba(255, 255, 255, .4) 0 1px, transparent 1px 2px); -webkit-mask: repeating-linear-gradient(#000 0 1px, transparent 1px 2px); mask: repeating-linear-gradient(#000 0 1px, transparent 1px 2px); }
.chip { height: 9px; width: 9px; border: 1px solid #000; }
.controls { flex: 0 0 210px; border-right: 1px solid #2e2e2e; }
.selected .controls { background: #303030; }
.c-top { display: flex; align-items: center; height: 31px; padding: 2px 3px 0 6px; }
.tname { flex: 1; padding-left: 3px; font-size: 12px; font-weight: 500; color: #9c9c9c; }
.c-top button { width: 22px; font: 10px/14px "DejaVu Sans", sans-serif; color: #b0b0b0; }
.c-top .dim { color: #555; }
.c-body { display: flex; gap: 4px; }
.c-rows { flex: 0 0 182px; }
.vol { display: flex; align-items: center; height: 18px; padding-left: 3px; margin-bottom: 4px; font-size: 12px; color: #a0a0a0; }
.vol .knob { margin: 0 4px; }
.io { display: flex; align-items: center; height: 17px; margin-bottom: 5px; padding-left: 5px; color: #a8a8a8; }
.io.auto { margin-top: 18px; }
.iarrow { width: 13px; height: 10px; margin-right: 4px; margin-bottom: 3px; }
.fold { width: 17px; padding-right: 9px; }
.drop { flex: 1; display: flex; align-items: center; justify-content: space-between; height: 18px; padding: 0 3px 0 5px; border: 1px solid #2d2d2d; border-radius: 2px; background: #1c1c1c; color: #c8c8c8; }
.selected .drop { border-color: #1c1c1c; }
.drop svg { color: #a8a8a8; }
.drop.phase { flex: 0 0 18px; padding: 0; margin-left: 4px; justify-content: center; }
.drop select { flex: 1; appearance: none; }
.vu { width: 18px; height: 94px; margin-top: 4px; border: 1px solid #000; background: linear-gradient(#1b1b1b 0 8px, #000 8px 9px, #1d1d1d 9px); display: flex; align-items: flex-end; padding-bottom: 1px; }
.vu::after { content: ""; flex: 1; height: 1px; background: #e4da50; }
.lane { flex: 1; min-width: 0; background: #1d1d1d; }
.lane svg { width: 100%; height: 100%; overflow: hidden; }
.range { position: absolute; left: 223px; right: 0; top: 0; bottom: 0; pointer-events: none; }
.range span { position: absolute; left: 24.8%; width: 4.6%; top: 0; bottom: 0; margin-left: -1px; border-left: 1px solid #c8302c; background: linear-gradient(transparent 134px, rgba(255, 255, 255, .29) 134px); background-clip: padding-box; }

.trackmap { position: relative; flex: 0 0 17px; display: flex; flex-direction: column; gap: 3px; margin: 31px 0 3px; padding: 0 1px 0 2px; background: #222; }
.trackmap span { flex: 1 1 0; }
.trackmap .last { background: linear-gradient(#707893 33%, #4e5b7b 33%); }
.thumb { position: absolute; left: 0; right: 0; top: -1px; height: 91%; display: flex; flex-direction: column; justify-content: space-between; align-items: center; border: solid #636363; border-width: 0 2px; }
.thumb i { width: 12px; height: 6px; margin: -3px 0; border: 2px solid #6a6a6a; border-radius: 3px; background: #333; }

.deck { flex: 0 0 37px; display: flex; align-items: center; padding-bottom: 1px; color: #b4b4b4; }
.deck output { flex: 0 0 315px; padding: 4px 0 0 4px; font-size: 19px; line-height: 24px; font-weight: 500; color: #3c96e4; }
.transport { display: flex; gap: 12px; }
.zooms { display: flex; gap: 12px; margin: 3px 6px 0 auto; }
.zooms button { width: 18px; }
.stop, .pause { color: #5a5a5a; }
.record { color: #7a2a2a; }

h2 { display: flex; align-items: center; gap: 9px; color: #c8c8c8; }
.essential { flex: 0 0 344px; }
.essential h2 { height: 35px; padding: 0 0 5px 12px; border-bottom: 2px solid #2d2d2d; }
.clip { height: 25px; padding: 5px 11px 4px; border-bottom: 2px solid #2d2d2d; }
.ess-body { padding: 9px 6px; }
.assign { padding-left: 5px; margin-bottom: 19px; }
.types { display: flex; width: 306px; height: 24px; border: 1px solid #303030; border-radius: 2px; background: #1d1d1d; color: #b4b4b4; }
.types button { flex: 1 1 auto; gap: 4px; border-right: 1px solid #303030; }
.types button:last-child { border: 0; }
.preset { display: flex; align-items: center; margin: 24px 0 14px; padding-left: 5px; color: #4c4c4c; }
.pre-box { flex: 0 0 226px; height: 20px; margin: 0 11px 0 5px; display: flex; align-items: center; padding-right: 4px; background: #272727; }
.pre-box select { flex: 1; appearance: none; opacity: 1; }
.preset button { margin-right: 5px; }
p { padding-left: 5px; line-height: 13px; white-space: nowrap; }

.levels { flex: 1; min-width: 0; padding: 0 6px; }
.lower h2 { height: 32px; padding: 0 0 4px 6px; }
.meter { height: 40px; border: 1px solid #000; background: linear-gradient(90deg, #d8cc4a 0 1px, #1c1c1c 1px calc(100% - 10px), #000 calc(100% - 10px) calc(100% - 9px), #1c1c1c calc(100% - 9px)); }
.scale { width: calc(100% - 12px); height: 19px; }
.inner { overflow: visible; }
.scale line { stroke: #8a8a8a; }
.scale text { fill: #a0a0a0; font-size: 10px; }
.selview { flex: 0 0 306px; }
.lower .selview h2 { height: 30px; padding: 0 0 2px 12px; }
.selview table { width: 295px; margin-left: 11px; font-size: 12px; }
.selview tr > :first-child { width: 53px; font-size: 11px; }
.selview thead th { height: 15px; font-size: 11px; }
.selview td, .selview tbody th { height: 21px; }
.selview td { padding-left: 2px; color: #3c96e4; }

.status { flex: 0 0 20px; display: flex; align-items: center; margin-top: 2px; background: #222; }
.msg { flex: 1; padding-left: 8px; }
.cell { height: 14px; padding-left: 8px; border-left: 1px solid #333; white-space: nowrap; }
.cell b { font: 9px/12px "DejaVu Sans", sans-serif; padding: 0 1px; }
.s1 { width: 50px; } .s2 { width: 156px; } .s3 { width: 73px; } .s4 { width: 82px; padding-left: 19px; } .s5 { width: 89px; } .s6 { width: 59px; }
</style>
